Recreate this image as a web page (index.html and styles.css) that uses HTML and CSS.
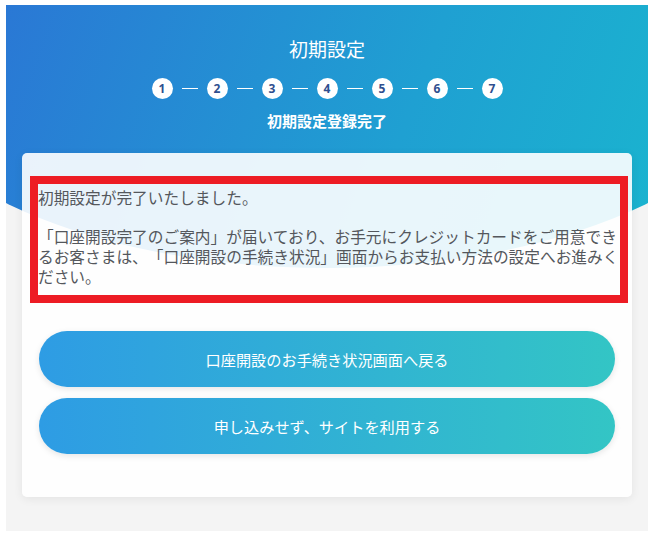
FILE: index.html
```html
<!DOCTYPE html>
<html lang="ja">
<head>
    <meta charset="UTF-8">
    <title>初期設定</title>
    <link rel="stylesheet" href="styles.css">
</head>
<body>
    <div class="frame">
        <div class="hero">
            <h1>初期設定</h1>
            <ol class="steps">
                <li class="step">1</li><li class="dash"></li>
                <li class="step">2</li><li class="dash"></li>
                <li class="step">3</li><li class="dash"></li>
                <li class="step">4</li><li class="dash"></li>
                <li class="step">5</li><li class="dash"></li>
                <li class="step">6</li><li class="dash"></li>
                <li class="step">7</li>
            </ol>
            <p class="step-name">初期設定登録完了</p>
        </div>

        <div class="card">
            <div class="message">
                初期設定が完了いたしました。<br><br>
                「口座開設完了のご案内」が届いており、お手元にクレジットカードをご用意できるお客さまは、「口座開設の手続き状況」画面からお支払い方法の設定へお進みください。
            </div>
            <div class="actions">
                <button class="btn">口座開設のお手続き状況画面へ戻る</button>
                <button class="btn">申し込みせず、サイトを利用する</button>
            </div>
        </div>
    </div>
</body>
</html>
```

FILE: styles.css
```css
body {margin: 5px 7px 9px 6px; background: #fff; font-family: "Noto Sans CJK JP", "Noto Sans", sans-serif; text-spacing-trim: space-all}
.frame {background: #f4f4f4; overflow: hidden}

/* header */
.hero {height: 263px; box-sizing: border-box; padding-top: 31px; color: #fff; text-align: center;
    background: linear-gradient(110deg, #2a78d5 0%, #1fa0d2 60%, #1ab4cf 100%);
    clip-path: ellipse(450px 217px at 50% 46px)}
.hero h1 {margin: 0; font-size: 19px; font-weight: 400; line-height: 26px}
.steps {list-style: none; margin: 16px 0 0; padding: 0; display: flex; justify-content: center; align-items: center}
.step {width: 21px; height: 21px; border-radius: 50%; background: #fff; color: #2f4f8f;
    font: 700 12px/21px "Open Sans", sans-serif; text-align: center}
.dash {width: 16px; height: 1px; background: #fff; margin: 0 9px}
.step-name {margin: 12px 0 0; font-size: 15px; font-weight: 700; line-height: 20px}

/* card */
.card {position: relative; margin: -115px 16px 34px; padding: 23px 17px 43px; background: rgba(255,255,255,0.9);
    border-radius: 5px; box-shadow: 0 2px 10px rgba(0,0,0,0.07)}
.message {margin: 0 -13px 0 -9px; border: 8px solid #ed1c24; padding: 4px 0 9px; color: #54575c;
    font-size: 15.7px; line-height: 1.25}
.actions {margin-top: 28px; display: flex; flex-direction: column; gap: 11px}
.btn {height: 56px; border: none; border-radius: 28px; color: #fff; font-family: inherit; font-size: 15.2px;
    background: linear-gradient(90deg, #2e9ce4, #33c5c5); box-shadow: 0 2px 6px rgba(0,0,0,0.1); cursor: pointer}
```
